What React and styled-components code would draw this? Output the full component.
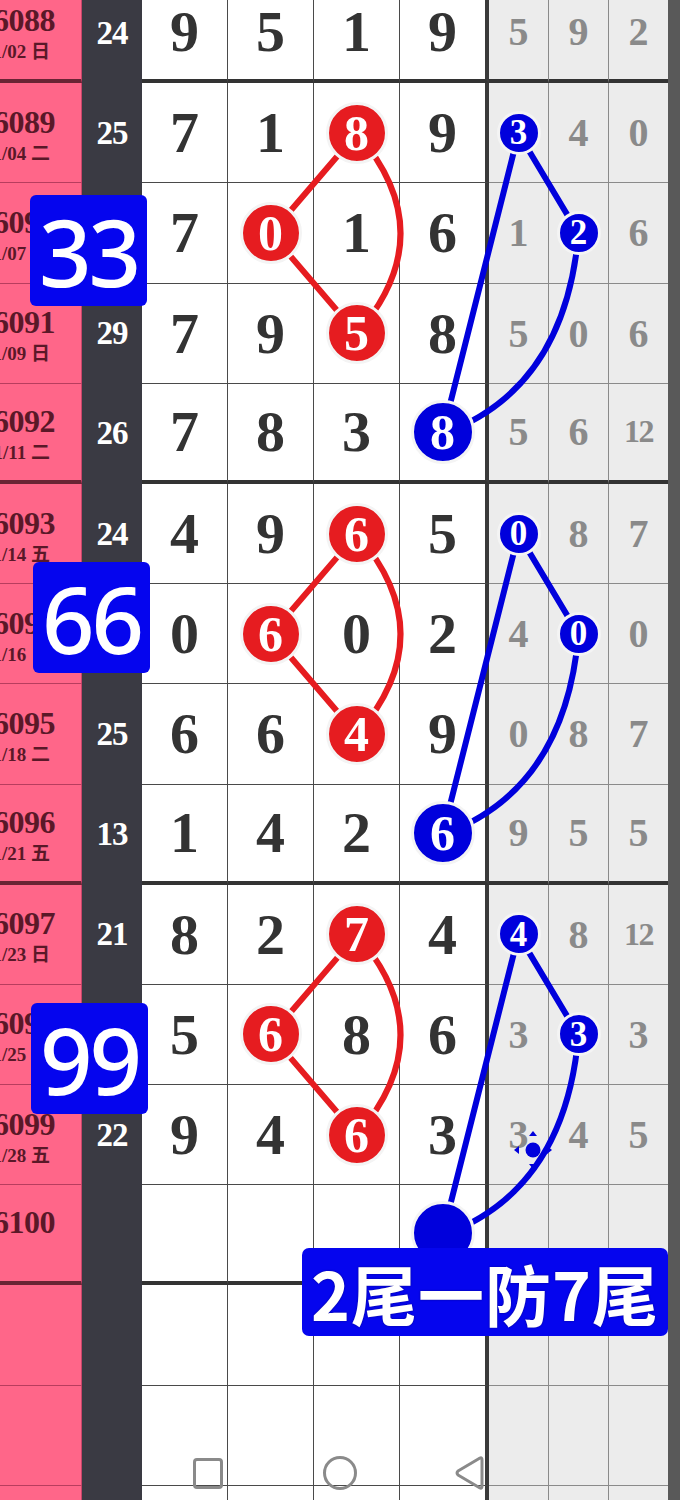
import React from "react";
import styled, { createGlobalStyle, css } from "styled-components";

const TOP = -17;
const H = 100.2;
const cy = (i) => TOP + H * i + H / 2;

const RED = "#e61c20";
const BLUE = "#0000dc";
const SERIF = `"Liberation Serif", "DejaVu Serif", "Noto Sans CJK SC", serif`;

/* main: digits; a string "r" suffix = red ball, grey: "b" suffix = blue ball, "B" = big blue ball */
const raw = [
  ["116088", "01/02 日", true, ["9", "5", "1", "9"], ["5", "9", "2"]],
  ["116089", "01/04 二", true, ["7", "1", "8r", "9"], ["3b", "4", "0"]],
  ["116090", "01/07 五", false, ["7", "0r", "1", "6"], ["1", "2b", "6"]],
  ["116091", "01/09 日", true, ["7", "9", "5r", "8"], ["5", "0", "6"]],
  ["116092", "01/11 二", true, ["7", "8", "3", "8B"], ["5", "6", "12"]],
  ["116093", "01/14 五", true, ["4", "9", "6r", "5"], ["0b", "8", "7"]],
  ["116094", "01/16 日", false, ["0", "6r", "0", "2"], ["4", "0b", "0"]],
  ["116095", "01/18 二", true, ["6", "6", "4r", "9"], ["0", "8", "7"]],
  ["116096", "01/21 五", true, ["1", "4", "2", "6B"], ["9", "5", "5"]],
  ["116097", "01/23 日", true, ["8", "2", "7r", "4"], ["4b", "8", "12"]],
  ["116098", "01/25 二", false, ["5", "6r", "8", "6"], ["3", "3b", "3"]],
  ["116099", "01/28 五", true, ["9", "4", "6r", "3"], ["3", "4", "5"]],
  ["116100", "", false, ["", "", "", "B"], ["", "", ""]],
  ["", "", false, ["", "", "", ""], ["", "", ""]],
  ["", "", false, ["", "", "", ""], ["", "", ""]],
  ["", "", false, ["", "", "", ""], ["", "", ""]],
];

const parse = (s) => {
  const m = /^(\d*)([rbB]?)$/.exec(s);
  return { value: m[1], mark: m[2] };
};

const rows = raw.map(([period, date, showSum, main, grey]) => {
  const mainCells = main.map(parse);
  const digits = mainCells.map((c) => c.value).filter((v) => v !== "");
  return {
    period,
    date,
    main: mainCells,
    grey: grey.map(parse),
    sum:
      showSum && digits.length
        ? String(digits.reduce((a, b) => a + Number(b), 0)).padStart(2, "0")
        : "",
  };
});

const GlobalStyle = createGlobalStyle`
  html, body {
    margin: 0;
    padding: 0;
    background: #ffffff;
    overflow: hidden;
  }
`;

const Page = styled.div`
  position: relative;
  width: 680px;
  height: 1500px;
  overflow: hidden;
  background: #ffffff;
`;

const Table = styled.div`
  display: flex;
  flex-direction: column;
  margin-top: ${TOP}px;
`;

const Row = styled.div`
  display: flex;
  height: ${H}px;
  flex: none;
`;

const cellBase = css`
  box-sizing: border-box;
  height: 100%;
  flex: none;
  display: flex;
  align-items: center;
  justify-content: center;
`;

const PinkCell = styled.div`
  ${cellBase};
  width: 82px;
  flex-direction: column;
  align-items: flex-end;
  padding-top: 6px;
  overflow: hidden;
  background: #ff6689;
  border-right: 1px solid #c8456a;
  border-bottom: ${(p) => (p.$thick ? "4px solid #6a2434" : "1px solid #b83d5e")};
  color: #5a1828;
  font-family: ${SERIF};
  font-weight: 700;
  white-space: nowrap;
`;

const Period = styled.div`
  font-size: 32px;
  line-height: 32px;
  margin-right: 26px;
  letter-spacing: -0.5px;
`;

const DateLine = styled.div`
  font-size: 19px;
  line-height: 24px;
  margin-top: 4px;
  margin-right: 31px;
`;

const SumCell = styled.div`
  ${cellBase};
  width: 60px;
  background: #3a3a43;
  color: #ffffff;
  font-family: ${SERIF};
  font-weight: 700;
  font-size: 33px;
  letter-spacing: -1px;
`;

const MainCell = styled.div`
  ${cellBase};
  width: ${(p) => (p.$last ? 89 : 86)}px;
  background: #ffffff;
  border-right: ${(p) => (p.$last ? "4px solid #3a3a3a" : "1px solid #4a4a4a")};
  border-bottom: ${(p) => (p.$thick ? "4px solid #333333" : "1px solid #4a4a4a")};
  color: #333333;
  font-family: ${SERIF};
  font-weight: 700;
  font-size: 58px;
`;

const GreyCell = styled.div`
  ${cellBase};
  width: ${(p) => (p.$last ? 59 : 60)}px;
  background: #ececec;
  border-right: ${(p) => (p.$last ? "none" : "1px solid #8a8a8a")};
  border-bottom: ${(p) => (p.$thick ? "4px solid #333333" : "1px solid #8a8a8a")};
  color: #8a8a8a;
  font-family: ${SERIF};
  font-weight: 700;
  font-size: ${(p) => (p.$small ? 32 : 40)}px;
  letter-spacing: ${(p) => (p.$small ? "-1.5px" : "0")};
`;

const EdgeCell = styled.div`
  ${cellBase};
  width: 12px;
  background: #595959;
`;

const Ball = styled.div`
  position: relative;
  z-index: 2;
  flex: none;
  box-sizing: border-box;
  width: ${(p) => p.$size}px;
  height: ${(p) => p.$size}px;
  margin-top: ${(p) => p.$shift || 0}px;
  border-radius: 50%;
  background: ${(p) => p.$color};
  border: 3px solid #f4f4f4;
  color: #ffffff;
  display: flex;
  align-items: center;
  justify-content: center;
  font-family: ${SERIF};
  font-weight: 700;
  font-size: ${(p) => p.$font}px;
  line-height: 1;
  letter-spacing: 0;
`;

const LineLayer = styled.svg`
  position: absolute;
  left: 0;
  top: 0;
  width: 680px;
  height: 1500px;
  z-index: 1;
  pointer-events: none;
`;

const MarkerLayer = styled.svg`
  position: absolute;
  left: 513px;
  top: 1130px;
  width: 40px;
  height: 40px;
  z-index: 3;
  pointer-events: none;
`;

const TailBadge = styled.div`
  position: absolute;
  z-index: 4;
  left: ${(p) => p.$x}px;
  top: ${(p) => p.$y}px;
  width: 117px;
  height: 111px;
  border-radius: 6px;
  background: #0505ee;
  color: #ffffff;
  display: flex;
  align-items: center;
  justify-content: center;
  font-family: "Noto Sans", "Open Sans", sans-serif;
  font-weight: 500;
  font-size: 92px;
  line-height: 1;
  letter-spacing: -3px;
  padding-top: 2px;
  box-sizing: border-box;
`;

const NoteLabel = styled.div`
  position: absolute;
  z-index: 4;
  left: 302px;
  top: 1248px;
  width: 366px;
  height: 88px;
  border-radius: 7px;
  background: #0505ee;
  color: #ffffff;
  display: flex;
  align-items: center;
  justify-content: center;
  font-family: "Noto Sans CJK SC", "Noto Sans", sans-serif;
  font-weight: 700;
  font-size: 66px;
  letter-spacing: 1px;
  text-shadow: 0 0 2px rgba(0, 0, 0, 0.45);
`;

const NavBar = styled.div`
  position: absolute;
  z-index: 5;
  left: 193px;
  top: 1455px;
  display: flex;
  align-items: center;
  gap: 100px;
`;

const NavSquare = styled.div`
  width: 30px;
  height: 31px;
  box-sizing: border-box;
  border: 3px solid #8a8a8a;
  border-radius: 4px;
`;

const NavCircle = styled.div`
  width: 34px;
  height: 34px;
  box-sizing: border-box;
  border: 3px solid #8a8a8a;
  border-radius: 50%;
`;

const NavBack = styled.svg`
  width: 30px;
  height: 36px;
  display: block;
  margin-left: -3px;
`;

function MainContent({ cell }) {
  if (cell.mark === "r")
    return (
      <Ball $size={62} $color={RED} $font={50}>
        {cell.value}
      </Ball>
    );
  if (cell.mark === "B")
    return (
      <Ball $size={64} $color={BLUE} $font={50}>
        {cell.value}
      </Ball>
    );
  return cell.value;
}

function GreyContent({ cell }) {
  if (cell.mark === "b")
    return (
      <Ball $size={44} $color={BLUE} $font={35}>
        {cell.value}
      </Ball>
    );
  return cell.value;
}

function RedLinks({ b }) {
  const A = [357, cy(b)];
  const B = [271, cy(b + 1)];
  const C = [357, cy(b + 2)];
  return (
    <g stroke={RED} strokeWidth="6" fill="none" strokeLinecap="round">
      <line x1={A[0]} y1={A[1]} x2={B[0]} y2={B[1]} />
      <line x1={B[0]} y1={B[1]} x2={C[0]} y2={C[1]} />
      <path d={`M${A[0]},${A[1]} Q444,${B[1]} ${C[0]},${C[1]}`} />
    </g>
  );
}

function BlueLinks({ b }) {
  const P = [518.5, cy(b)];
  const Q = [578.5, cy(b + 1)];
  const R = [442.5, cy(b + 3)];
  return (
    <g stroke={BLUE} strokeWidth="6" fill="none" strokeLinecap="round">
      <line x1={P[0]} y1={P[1]} x2={R[0]} y2={R[1]} />
      <line x1={P[0]} y1={P[1]} x2={Q[0]} y2={Q[1]} />
      <path d={`M${Q[0]},${Q[1]} Q565,${Q[1] + 156} ${R[0]},${R[1]}`} />
    </g>
  );
}

export default function App() {
  return (
    <>
      <GlobalStyle />
      <Page>
        <Table>
          {rows.map((r, i) => {
            const thick = i % 4 === 0;
            return (
              <Row key={i}>
                <PinkCell $thick={thick}>
                  <Period>{r.period || "\u00a0"}</Period>
                  <DateLine>{r.date || "\u00a0"}</DateLine>
                </PinkCell>
                <SumCell>{r.sum}</SumCell>
                {r.main.map((c, j) => (
                  <MainCell key={j} $thick={thick} $last={j === 3}>
                    <MainContent cell={c} />
                  </MainCell>
                ))}
                {r.grey.map((c, k) => (
                  <GreyCell
                    key={k}
                    $thick={thick}
                    $last={k === 2}
                    $small={c.value.length > 1}
                  >
                    <GreyContent cell={c} />
                  </GreyCell>
                ))}
                <EdgeCell />
              </Row>
            );
          })}
        </Table>

        <LineLayer viewBox="0 0 680 1500">
          <RedLinks b={1} />
          <RedLinks b={5} />
          <RedLinks b={9} />
          <BlueLinks b={1} />
          <BlueLinks b={5} />
          <BlueLinks b={9} />
        </LineLayer>

        <MarkerLayer viewBox="0 0 40 40">
          <g fill={BLUE}>
            <circle cx="20" cy="20" r="7.5" />
            <polygon points="16,6 24,6 20,1" />
            <polygon points="16,34 24,34 20,39" />
            <polygon points="6,16 6,24 1,20" />
            <polygon points="34,16 34,24 39,20" />
          </g>
        </MarkerLayer>

        <TailBadge $x={30} $y={195}>33</TailBadge>
        <TailBadge $x={33} $y={562}>66</TailBadge>
        <TailBadge $x={31} $y={1003}>99</TailBadge>

        <NoteLabel>2尾一防7尾</NoteLabel>

        <NavBar>
          <NavSquare />
          <NavCircle />
          <NavBack viewBox="0 0 30 36">
            <path
              d="M26 3 L4 16 Q2 18 4 20 L26 33 Q28 34 28 31 L28 5 Q28 2 26 3 Z"
              fill="none"
              stroke="#8a8a8a"
              strokeWidth="3"
              strokeLinejoin="round"
            />
          </NavBack>
        </NavBar>
      </Page>
    </>
  );
}
